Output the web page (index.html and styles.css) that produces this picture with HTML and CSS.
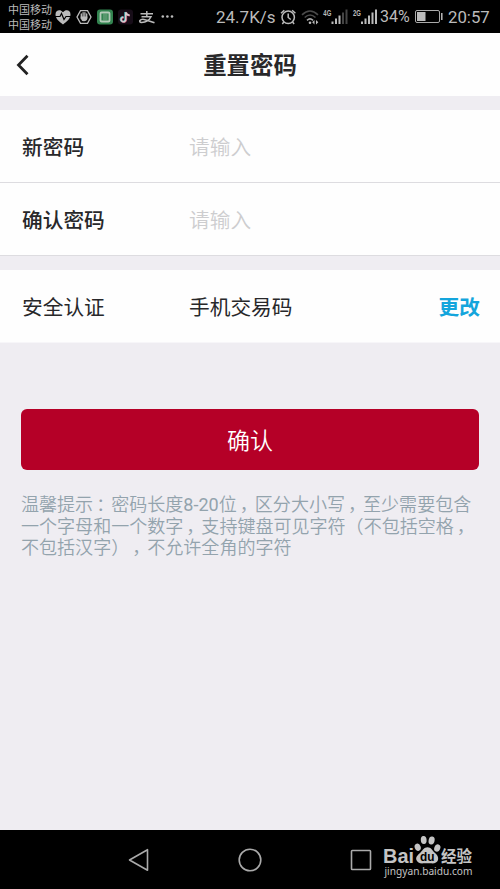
FILE: index.html
```html
<!DOCTYPE html>
<html lang="zh-CN">
<head>
<meta charset="utf-8">
<title>重置密码</title>
<link rel="stylesheet" href="styles.css">
</head>
<body>
<div class="screen">
  <div class="status">
    <div class="carrier"><span>中国移动</span><span>中国移动</span></div>
    <svg class="tray" width="122" height="33" viewBox="54 0 122 33">
      <path d="M63 24.5C59 21.5 55.500 18.500 55.500 14.500C55.500 9.800 60.500 9 63 12.300C65.500 9 70.500 9.800 70.500 14.500C70.500 18.500 67 21.500 63 24.500Z" fill="#bbb"/>
      <path d="M55 16.500H60L61.500 13.500L64 19.500L66 16.500H71" fill="none" stroke="#000" stroke-width="1.200"/>
      <path d="M80.500 10.700H87.500L91 17L87.500 23.300H80.500L77 17Z" fill="none" stroke="#bbb" stroke-width="1.300"/>
      <path d="M81.300 18V14M83.100 17V12.700M84.900 17V12.700M86.700 18V14" stroke="#bbb" stroke-width="1.300" stroke-linecap="round"/>
      <path d="M80.700 16.500H87.300V18.500Q87 21.300 84 21.300Q81.500 21.300 80.700 18.500Z" fill="#bbb"/>
      <rect x="97" y="9.500" width="16" height="15" rx="3" fill="#338450"/>
      <rect x="100.500" y="12.500" width="9" height="9" rx="1" fill="#338450" stroke="#b5cbb9" stroke-width="1.800"/>
      <path d="M103 15H107.500M103 17H107.500M103 19H107.500" stroke="#91b899" stroke-width=".8"/>
      <rect x="118" y="9.500" width="15" height="15" rx="3" fill="#170d18"/>
      <g fill="none" stroke-width="1.900">
        <path d="M125.200 12V19.300A2.300 2.300 0 1 1 123 17M125.200 12Q126 15 129 15" stroke="#3fb4ba"/>
        <path d="M126.200 12.500V19.800A2.300 2.300 0 1 1 124 17.500M126.200 12.500Q127 15.500 130 15.500" stroke="#b83e61"/>
        <path d="M125.700 12.200V19.500A2.300 2.300 0 1 1 123.500 17.200M125.700 12.200Q126.500 15.200 129.500 15.200" stroke="#d0d0d0" stroke-width="1.500"/>
      </g>
      <path d="M140.500 13.800H153M146.800 11V16.500M141.500 16.700H151Q148.500 22 141.500 22.500C138 22 140 18.800 144 19.400Q149 20.500 154.500 22.800" fill="none" stroke="#bbb" stroke-width="1.500"/>
      <g fill="#bbb"><circle cx="162.800" cy="16.500" r="1.300"/><circle cx="167.400" cy="16.500" r="1.300"/><circle cx="172" cy="16.500" r="1.300"/></g>
    </svg>
    <span class="speed">24.7K/s</span>
    <svg class="signals" width="101" height="33" viewBox="278 0 101 33">
      <g fill="none" stroke="#bbb" stroke-width="1.500">
        <circle cx="288.200" cy="17.300" r="6.200"/>
        <path d="M288.200 13.500V17.500L290.800 19.500M281 13.300L284.300 10.200M292.100 10.200L295.400 13.300M283.800 22L282.300 24M292.600 22L294.100 24"/>
      </g>
      <g fill="none" stroke="#4a4a4a" stroke-width="1.600">
        <path d="M302 14.800Q310 7.200 318 14.800M304.700 17.500Q310 12.500 315.500 17.500"/>
        <path d="M307 20.300Q310 17.500 313 20.300" stroke="#aaa"/>
      </g>
      <circle cx="310" cy="22.700" r="1.300" fill="#bbb"/>
      <path d="M314.500 20L312.200 22.200L314.500 24.400ZM316 20L318.300 22.200L316 24.400Z" fill="#bbb"/>
      <text x="323.300" y="15.500" class="net" textLength="8" lengthAdjust="spacingAndGlyphs">4G</text>
      <g fill="#bbb"><rect x="331.500" y="21.500" width="2" height="2.500"/><rect x="335" y="18.500" width="2" height="5.500"/><rect x="338.500" y="15.500" width="2" height="8.500"/></g>
      <g fill="#454545"><rect x="342" y="12.500" width="2" height="11.500"/><rect x="345.500" y="9.500" width="2" height="14.500"/></g>
      <text x="353" y="15.500" class="net" textLength="8" lengthAdjust="spacingAndGlyphs">2G</text>
      <g fill="#bbb"><rect x="361" y="21.500" width="2" height="2.500"/><rect x="364.500" y="18.500" width="2" height="5.500"/><rect x="368" y="15.500" width="2" height="8.500"/><rect x="371.500" y="12.500" width="2" height="11.500"/><rect x="375" y="9.500" width="2" height="14.500"/></g>
    </svg>
    <span class="percent">34%</span>
    <svg class="battery" width="30" height="33" viewBox="415 0 30 33">
      <rect x="415.500" y="10.500" width="24" height="12" rx="1.500" fill="none" stroke="#aaa"/>
      <rect x="417" y="12" width="8.500" height="9" fill="#bbb"/>
      <path d="M441.800 13V20" stroke="#bbb" stroke-width="1.500"/>
    </svg>
    <span class="clock">20:57</span>
  </div>
  <header class="header">
    <svg class="back" width="14" height="24" viewBox="0 0 14 24"><path d="M11.500 2.800L2.500 12L11.500 21.200" fill="none" stroke="#222" stroke-width="2.800"/></svg>
    <h1>重置密码</h1>
  </header>
  <main>
    <div class="group">
      <div class="row"><span class="label strong">新密码</span><span class="hint">请输入</span></div>
      <div class="row last"><span class="label strong">确认密码</span><span class="hint">请输入</span></div>
    </div>
    <div class="group second">
      <div class="row plain"><span class="label">安全认证</span><span>手机交易码</span><a class="change">更改</a></div>
    </div>
    <button class="confirm">确认</button>
    <p class="tip">温馨提示<i>：</i>密码长度<b>8-20</b>位<i>，</i>区分大小写<i>，</i>至少需要包含<br>一个字母和一个数字<i>，</i>支持键盘可见字符（不包括空格<i>，</i><br>不包括汉字）<i>，</i>不允许全角的字符</p>
  </main>
  <nav class="nav">
    <svg class="nav-back" width="24" height="26" viewBox="0 0 24 26"><path d="M20.500 2.700V23.300L2.500 13Z" fill="none" stroke="#aaa" stroke-width="1.600" stroke-linejoin="round"/></svg>
    <svg class="nav-home" width="26" height="26" viewBox="0 0 26 26"><circle cx="13" cy="13" r="10.800" fill="none" stroke="#aaa" stroke-width="1.600"/></svg>
    <svg class="nav-recent" width="22" height="26" viewBox="0 0 22 26"><rect x="1.500" y="3.500" width="19" height="19" rx=".8" fill="none" stroke="#aaa" stroke-width="1.600"/></svg>
    <svg class="brand" width="96" height="54" viewBox="380 835 96 54">
      <g fill="#c4c4c4">
        <text x="383" y="862.500" class="bai" textLength="31" lengthAdjust="spacingAndGlyphs">Bai</text>
        <ellipse cx="417.700" cy="847.200" rx="3" ry="3.700" transform="rotate(-20 417.700 847.200)"/>
        <ellipse cx="423.700" cy="840" rx="2.900" ry="4" transform="rotate(-5 423.700 840)"/>
        <ellipse cx="431.600" cy="840.500" rx="3" ry="4" transform="rotate(12 431.600 840.500)"/>
        <ellipse cx="437.300" cy="848" rx="3" ry="3.800" transform="rotate(20 437.300 848)"/>
        <path d="M427.500 847.200C431 847.200 432.300 850.300 434.500 852.500C437.300 855 438.800 857 438 860C437.200 862.800 434.300 863.800 430.500 863.300H424C420.500 863.900 417.200 862.800 416.300 859.800C415.600 856.500 418.500 854.500 420.500 852.500C422.800 850 424 847.200 427.500 847.200Z"/>
        <text x="420" y="861" class="du" textLength="14.500" lengthAdjust="spacingAndGlyphs">du</text>
        <text x="441" y="862.200" class="jingyan" textLength="31" lengthAdjust="spacingAndGlyphs">经验</text>
        <text x="384.500" y="875" class="site" textLength="88" lengthAdjust="spacingAndGlyphs">jingyan.baidu.com</text>
      </g>
    </svg>
  </nav>
</div>
</body>
</html>
```
FILE: styles.css
```css
* { box-sizing: border-box; }
body {
  margin: 0;
  background: #efedf2;
  color: #28282a;
  font-family: Roboto, "Noto Sans CJK SC", sans-serif;
}
svg { display: block; flex: none; }
.screen { width: 500px; height: 889px; display: flex; flex-direction: column; }
.status {
  height: 33px;
  background: #000;
  color: #bbb;
  display: flex;
  align-items: center;
  white-space: nowrap;
}
.carrier {
  width: 46px;
  margin-left: 8px;
  padding-top: 2px;
  display: flex;
  flex-direction: column;
  font-size: 11px;
  line-height: 15px;
}
.speed { width: 62px; margin-left: 40px; padding-top: 1px; font-size: 17px; }
.percent { width: 35px; margin-left: 1px; font-size: 16px; }
.clock { margin-left: 3px; padding-top: 1px; font-size: 16.800px; }
.net { fill: #bbb; font: bold 8.500px "Liberation Sans", sans-serif; }
.header {
  height: 63px;
  background: #fefefe;
  display: grid;
  grid-template-columns: 100px 300px 100px;
  align-items: center;
}
.back { margin-left: 16px; }
h1 { margin: 0; padding-top: 3px; text-align: center; font-size: 23.400px; line-height: 32px; font-weight: 700; }
main { flex: 1; padding-top: 14px; }
.group { background: #fefefe; }
.second { margin-top: 14px; }
.row {
  height: 73px;
  padding: 0 20px 0 22px;
  border-bottom: 1px solid #dddce0;
  display: flex;
  align-items: center;
  font-size: 20.700px;
}
.plain { border-bottom-color: #f7f6f9; }
.label { width: 167px; }
.strong { font-weight: 500; }
.hint { color: #cdcdcf; font-weight: 350; }
.change { margin-left: auto; color: #14a5dc; font-weight: 700; }
.confirm {
  display: block;
  width: 458px;
  height: 61px;
  margin: 66px 0 0 21px;
  padding: 0 0 1px;
  border: 0;
  border-radius: 6px;
  background: #b50027;
  color: #fff;
  font: 350 23px "Noto Sans CJK SC", sans-serif;
}
.tip {
  margin: 24px 0 0 21px;
  color: #93a3ad;
  font-size: 18.050px;
  line-height: 21.500px;
  font-weight: 350;
  text-spacing-trim: space-all;
  font-kerning: none;
  white-space: nowrap;
}
.tip i { font-style: normal; margin: 0 -3px 0 3px; }
.tip b { font-weight: 400; }
.nav { height: 59px; background: #000; display: flex; align-items: flex-start; }
.nav-back { margin: 17px 0 0 127px; }
.nav-home { margin: 17px 0 0 86px; }
.nav-recent { margin: 17px 0 0 87px; }
.brand { margin: 5px 0 0 8px; }
.bai { font: bold 19.500px "Liberation Sans", sans-serif; }
.du { fill: #000; font: bold 12.500px "Liberation Sans", sans-serif; }
.jingyan { font: bold 16px "Noto Sans CJK SC", sans-serif; }
.site { font: 10.500px "Noto Sans", sans-serif; }
```
